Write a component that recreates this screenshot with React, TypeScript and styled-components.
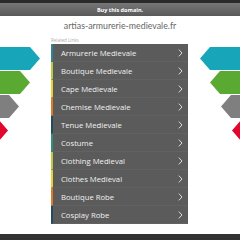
import React from 'react'
import styled, { createGlobalStyle } from 'styled-components'

const Global = createGlobalStyle`
  html, body { margin: 0; padding: 0; background: #fff; }
  body { font-family: 'Open Sans', 'Liberation Sans', sans-serif; }
`

const links = [
  { label: 'Armurerie Medievale', stripe: '#2a8595' },
  { label: 'Boutique Medievale', stripe: '#b9ca3c' },
  { label: 'Cape Medievale', stripe: '#e6cf31' },
  { label: 'Chemise Medievale', stripe: '#e07a22' },
  { label: 'Tenue Medievale', stripe: '#1f4f5d' },
  { label: 'Costume', stripe: '#2e8f7f' },
  { label: 'Clothing Medieval', stripe: '#b9ca3c' },
  { label: 'Clothes Medieval', stripe: '#e6cf31' },
  { label: 'Boutique Robe', stripe: '#e07a22' },
  { label: 'Cosplay Robe', stripe: '#1f4f5d' },
]

const arrows = [
  { color: '#17a6b9', tip: 40 },
  { color: '#5aa932', tip: 30 },
  { color: '#7f7f7f', tip: 19 },
  { color: '#e2062d', tip: 8 },
]

const Arrow = ({ color, tip, flip }: { color: string; tip: number; flip?: boolean }) => {
  const s = tip - 10
  const pts = flip
    ? `52,0 ${52 - s},0 ${52 - tip},11.5 ${52 - s},23 52,23`
    : `0,0 ${s},0 ${tip},11.5 ${s},23 0,23`
  return (
    <svg width="52" height="23" viewBox="0 0 52 23">
      <polygon points={pts} fill={color} />
    </svg>
  )
}

const Chevron = () => (
  <svg width="5" height="8" viewBox="0 0 5 8">
    <path d="M0.8 0.6 L4 4 L0.8 7.4" fill="none" stroke="#e8e8e8" strokeWidth="0.9" />
  </svg>
)

const App = () => {
  return (
    <Page>
      <Global />
      <TopBar>Buy this domain.</TopBar>
      <Domain>artias-armurerie-medievale.fr</Domain>
      <Main>
        <Side>
          {arrows.map((a) => (
            <Arrow key={a.color} color={a.color} tip={a.tip} />
          ))}
        </Side>
        <Center>
          <Related>Related Links</Related>
          <List>
            {links.map((l) => (
              <Item key={l.label} $stripe={l.stripe}>
                <span>{l.label}</span>
                <Chevron />
              </Item>
            ))}
          </List>
        </Center>
        <Side $right>
          {arrows.map((a) => (
            <Arrow key={a.color} color={a.color} tip={a.tip} flip />
          ))}
        </Side>
      </Main>
      <Footer />
    </Page>
  )
}

export default App

const Page = styled.div`
  width: 240px;
  height: 240px;
  display: flex;
  flex-direction: column;
  overflow: hidden;
`
const TopBar = styled.div`
  height: 13px;
  border-top: 3px solid #2a2a2a;
  background: linear-gradient(#767676, #595959);
  color: #fff;
  font-size: 5.5px;
  font-weight: 700;
  display: flex;
  align-items: center;
  justify-content: center;
`
const Domain = styled.div`
  margin-top: 3px;
  height: 13px;
  line-height: 13px;
  text-align: center;
  font-family: 'Lato', 'Open Sans', sans-serif;
  font-size: 8.8px;
  color: #666;
`
const Main = styled.div`
  margin-top: 4px;
  display: grid;
  grid-template-columns: 51px 137px 52px;
`
const Side = styled.div<{ $right?: boolean }>`
  padding-top: 11px;
  display: flex;
  flex-direction: column;
  gap: 1px;
  align-items: ${(p) => (p.$right ? 'flex-end' : 'flex-start')};
  svg { display: block; }
`
const Center = styled.div`
  display: flex;
  flex-direction: column;
`
const Related = styled.div`
  height: 8px;
  font-size: 4.5px;
  line-height: 8px;
  color: #aaa;
`
const List = styled.div`
  background: #5b5b5b;
  display: flex;
  flex-direction: column;
`
const Item = styled.div<{ $stripe: string }>`
  height: 18px;
  box-sizing: border-box;
  border-left: 2px solid ${(p) => p.$stripe};
  border-bottom: 1px solid #626262;
  padding: 0 5px 0 8px;
  display: flex;
  align-items: center;
  justify-content: space-between;
  color: #f0f0f0;
  font-size: 7.7px;
  font-weight: 500;
  svg { display: block; }
`
const Footer = styled.div`
  margin-top: auto;
  height: 6px;
  background: #333;
`
